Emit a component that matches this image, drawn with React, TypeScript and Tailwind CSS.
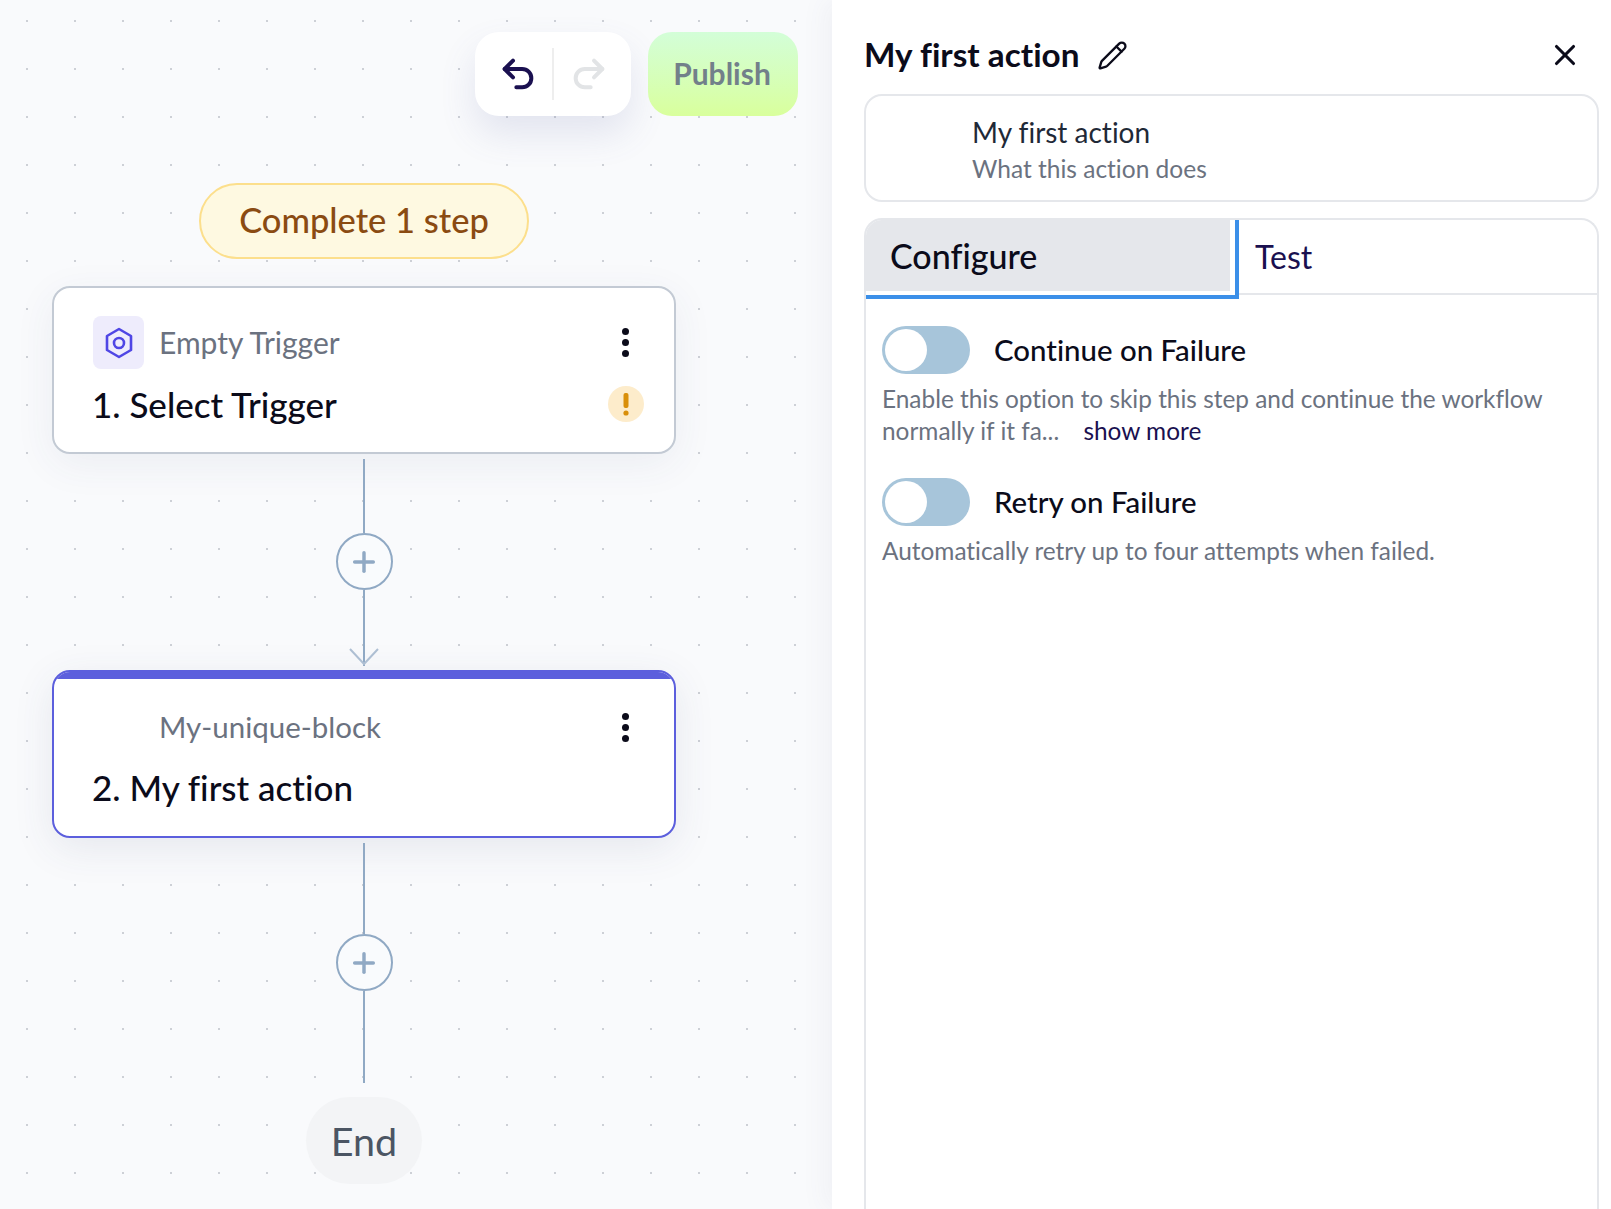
import { Pencil, Plus, Redo2, Undo2, X } from 'lucide-react';

function Kebab() {
    return (
        <div className="flex flex-col gap-1">
            <span className="size-[7px] rounded-full bg-[#0b0b1a]" />
            <span className="size-[7px] rounded-full bg-[#0b0b1a]" />
            <span className="size-[7px] rounded-full bg-[#0b0b1a]" />
        </div>
    );
}

function AddButton() {
    return (
        <div className="flex size-[57px] items-center justify-center rounded-full border-2 border-[#90a9c4] bg-[#f9fbfd]">
            <Plus size={32} strokeWidth={2.6} className="text-[#90a9c4]" />
        </div>
    );
}

function Toggle() {
    return (
        <div className="flex h-12 w-[88px] items-center rounded-full bg-[#a7c5da] pl-[3px]">
            <span className="size-[42px] rounded-full bg-white" />
        </div>
    );
}

export default function App() {
    return (
        <div className="flex h-[1209px] w-[1611px] overflow-hidden bg-white font-['Lato',sans-serif] [font-variant-ligatures:none]">
            <div className="h-full w-[832px] shrink-0 bg-[#f9fafc] bg-[radial-gradient(circle,#cdd0d6_1px,transparent_1.3px)] bg-[size:48px_48px] bg-[position:3px_-3px] pt-8">
                <div className="flex justify-end gap-[17px] pr-[34px]">
                    <div className="flex h-[84px] w-[156px] items-center rounded-3xl bg-white shadow-[0_18px_36px_rgba(90,100,160,0.14)]">
                        <div className="flex w-[77px] justify-center pl-2">
                            <Undo2 size={40} strokeWidth={2.4} className="text-[#1a1050]" />
                        </div>
                        <div className="h-[52px] w-0.5 bg-[#eeeeee]" />
                        <div className="flex w-[77px] justify-center pr-2">
                            <Redo2 size={40} strokeWidth={2.4} className="text-[#e2e4e6]" />
                        </div>
                    </div>
                    <div className="flex h-[84px] w-[150px] items-center justify-center rounded-3xl bg-gradient-to-b from-[#d3fed8] to-[#d9ff9c] pb-0.5 pr-0.5 text-[30px] font-bold text-[#72808a]">
                        Publish
                    </div>
                </div>

                <div className="ml-[52px] mt-[67px] flex w-[624px] flex-col items-center">
                    <div className="flex h-[76px] w-[330px] items-center justify-center rounded-full border-2 border-[#fcdf8c] bg-[#fef9e1] pb-0.5 text-[34.5px] font-medium text-[#8a4b12]">
                        Complete 1 step
                    </div>

                    <div className="mt-[27px] h-[168px] w-full rounded-[18px] border-2 border-[#c3cad4] bg-white px-[38px] pt-7 shadow-[0_10px_40px_rgba(60,70,110,0.07)]">
                        <div className="flex h-[53px] items-center">
                            <div className="ml-px flex h-[53px] w-[51px] items-center justify-center rounded-lg bg-[#eeecfc]">
                                <svg width="30" height="34" viewBox="0 0 30 34" fill="none" stroke="#4f46e5" strokeWidth="2.6" strokeLinejoin="round">
                                    <path d="M15 3 L27 10 V24 L15 31 L3 24 V10 Z" />
                                    <circle cx="15" cy="17" r="5" />
                                </svg>
                            </div>
                            <span className="ml-[15px] text-[30px] text-[#6b7280]">Empty Trigger</span>
                            <div className="ml-auto pr-[7px]"><Kebab /></div>
                        </div>
                        <div className="mt-[9px] flex items-center justify-between">
                            <span className="text-[35px] font-medium leading-[52px] text-[#0b0b1a]">1. Select Trigger</span>
                            <div className="-mr-[8px] flex size-9 items-center justify-center rounded-full bg-[#fdeccb]">
                                <svg width="6" height="24" viewBox="0 0 6 24" fill="#d98f0a">
                                    <rect x="0.5" y="1" width="5" height="15" rx="2" />
                                    <circle cx="3" cy="21" r="2.6" />
                                </svg>
                            </div>
                        </div>
                    </div>

                    <div className="mt-[5px] h-[74px] w-0.5 bg-[#90a9c4]" />
                    <AddButton />
                    <div className="relative h-[76px] w-0.5 bg-[#90a9c4]">
                        <svg className="absolute -left-[15px] bottom-0" width="32" height="18" viewBox="0 0 32 18" fill="none" stroke="#aebfd3" strokeWidth="2">
                            <path d="M2 1 L16 16 L30 1" />
                        </svg>
                    </div>

                    <div className="mt-1 h-[168px] w-full overflow-hidden rounded-[18px] border-2 border-[#5c5fdd] bg-white shadow-[0_10px_40px_rgba(60,70,110,0.1)]">
                        <div className="h-[7px] bg-[#5c5fdd]" />
                        <div className="px-[38px] pt-[22px]">
                            <div className="flex h-[53px] items-center">
                                <span className="ml-[67px] text-[29.5px] text-[#6b7280]">My-unique-block</span>
                                <div className="ml-auto pr-[7px]"><Kebab /></div>
                            </div>
                            <div className="mt-[7px] text-[35px] font-medium leading-[52px] text-[#0b0b1a]">2. My first action</div>
                        </div>
                    </div>

                    <div className="mt-[5px] h-[91px] w-0.5 bg-[#90a9c4]" />
                    <AddButton />
                    <div className="h-[92px] w-0.5 bg-[#90a9c4]" />
                    <div className="mt-3.5 flex h-[87px] w-[116px] items-center justify-center rounded-full bg-[#f3f4f6] text-[39.5px] text-[#4b5563]">
                        End
                    </div>
                </div>
            </div>

            <div className="h-full flex-1 bg-white pl-8 pr-3 shadow-[-8px_0_24px_rgba(70,80,120,0.05)]">
                <div className="flex h-[94px] items-center justify-between pt-4">
                    <div className="flex items-center gap-[17px]">
                        <span className="text-[33.3px] font-bold text-[#0b0b1a]">My first action</span>
                        <Pencil size={31} strokeWidth={1.8} className="text-[#0b0b1a]" />
                    </div>
                    <X size={34} strokeWidth={2.2} className="mr-[17px] text-[#0b0b1a]" />
                </div>

                <div className="h-[108px] rounded-[18px] border-2 border-[#e5e7eb] pl-[106px] pt-[18px]">
                    <div className="text-[28px] leading-9 text-[#1f2937]">My first action</div>
                    <div className="mt-px text-[24.5px] leading-9 text-[#6b7280]">What this action does</div>
                </div>

                <div className="mt-4 h-[1020px] rounded-t-[18px] border-x-2 border-t-2 border-[#e5e7eb]">
                    <div className="flex h-[79px] items-stretch">
                        <div className="h-[79px] w-[373px] border-b-4 border-r-4 border-[#3b8fe8] pb-1 pr-[5px]">
                            <div className="flex h-full items-center rounded-tl-[16px] bg-[#e5e7eb] pl-6 text-[34px] font-medium text-[#0b0b1a]">
                                Configure
                            </div>
                        </div>
                        <div className="flex h-[75px] flex-1 items-center border-b-2 border-[#e5e7eb] pl-4 text-[32px] text-[#1a1050]">
                            Test
                        </div>
                    </div>

                    <div className="pl-4 pt-[27px]">
                        <div className="flex items-center gap-6">
                            <Toggle />
                            <span className="text-[29.4px] font-medium text-[#0b0b1a]">Continue on Failure</span>
                        </div>
                        <div className="mt-[9px] text-[24.4px] leading-8 text-[#6b7280]">
                            <div>Enable this option to skip this step and continue the workflow</div>
                            <div>normally if it fa... <span className="ml-[18px] text-[#1a1050]">show more</span></div>
                        </div>
                        <div className="mt-[31px] flex items-center gap-6">
                            <Toggle />
                            <span className="text-[29.4px] font-medium text-[#0b0b1a]">Retry on Failure</span>
                        </div>
                        <div className="mt-[9px] text-[24.4px] leading-8 text-[#6b7280]">
                            Automatically retry up to four attempts when failed.
                        </div>
                    </div>
                </div>
            </div>
        </div>
    );
}
